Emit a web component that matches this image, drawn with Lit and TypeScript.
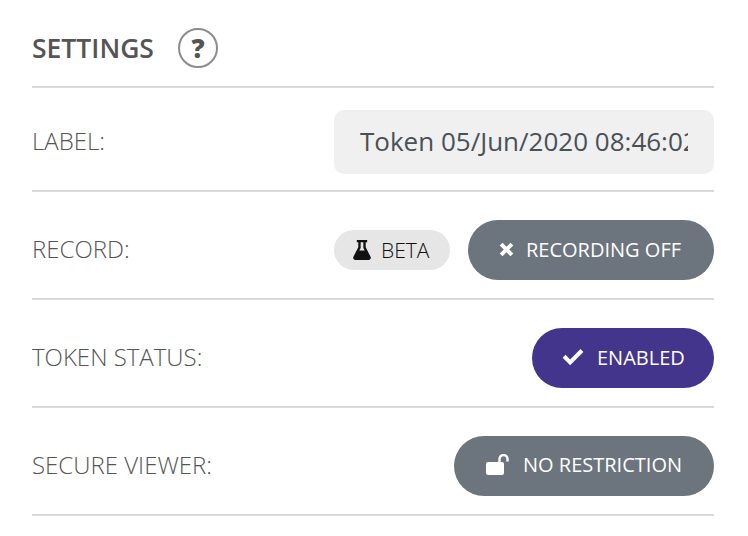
import { LitElement, html, css, svg } from "lit";
import { customElement } from "lit/decorators.js";

const flask = svg`<path fill-rule="evenodd" d="M4.4 1h9.2v2h-1.3v4.2l4.3 8c.7 1.4-.2 2.8-1.7 2.8H3.1c-1.5 0-2.4-1.4-1.7-2.8l4.3-8V3H4.4V1zm3.4 2v4.8L6.6 10h4.8l-1.2-2.2V3H7.8z"/>`;
const times = svg`<path d="M2.6 5.2 5.2 2.6 9 6.4 12.8 2.6 15.4 5.2 11.6 9 15.4 12.8 12.8 15.4 9 11.6 5.2 15.4 2.6 12.8 6.4 9 2.6 5.2z"/>`;
const check = svg`<path d="M0.6 9.6 3.2 7 7.4 11.2 16.8 1.8 19.4 4.4 7.4 16.4 0.6 9.6z"/>`;
const unlock = svg`<rect x="0" y="8" width="18" height="13" rx="2"/><path d="M13.5 9V5a4 4 0 0 1 8 0v2.4" fill="none" stroke="currentColor" stroke-width="2.4"/>`;

@customElement("app-root")
export class AppRoot extends LitElement {
  static styles = css`
    :host { display: block; width: 748px; height: 536px; box-sizing: border-box; padding: 0 34px 0 32px; background: #fff; font-family: "Open Sans", sans-serif; overflow: hidden; }
    .head { display: flex; align-items: center; gap: 24px; height: 88px; padding-top: 10px; box-sizing: border-box; border-bottom: 2px solid #d9d9d9; }
    h2 { margin: 0; font-size: 26.5px; font-weight: 600; color: #555; line-height: 32px; }
    .help { width: 40px; height: 40px; box-sizing: border-box; border: 2px solid #8c8c8c; border-radius: 50%; display: flex; align-items: center; justify-content: center; font-size: 26px; font-weight: 800; color: #555; line-height: 1; }
    .row { display: flex; align-items: center; justify-content: space-between; height: 108px; box-sizing: border-box; padding-top: 10px; border-bottom: 2px solid #d9d9d9; }
    .row.first { height: 104px; padding-top: 6px; }
    .label { font-size: 24px; font-weight: 300; color: #555; padding-bottom: 3px; }
    .controls { display: flex; align-items: center; gap: 18px; }
    .input { width: 380px; height: 64px; box-sizing: border-box; background: #f0f0f0; border-radius: 10px; padding: 0 26px 2px; display: flex; align-items: center; font-size: 26px; color: #495057; }
    .clip { width: 328px; overflow: hidden; white-space: nowrap; }
    .beta { display: flex; align-items: center; gap: 10px; height: 40px; width: 116px; box-sizing: border-box; padding-left: 19px; border-radius: 20px; background: #e6e6e6; font-size: 21px; font-weight: 300; color: #111; }
    .beta svg { width: 18px; height: 20px; fill: #111; }
    .btn { display: flex; align-items: center; height: 60px; box-sizing: border-box; border-radius: 30px; padding-bottom: 2px; color: #fff; background: #6c757d; font-size: 20px; }
    .btn svg { fill: currentColor; display: block; }
    .off { width: 246px; padding-left: 29px; gap: 10px; }
    .off svg { width: 19px; height: 19px; }
    .on { width: 182px; padding-left: 30px; gap: 13px; background: #43348c; }
    .on svg { width: 22px; height: 20px; }
    .sec { width: 260px; padding-left: 32px; gap: 14px; padding-bottom: 3px; }
    .sec svg { width: 23px; height: 21px; }
  `;

  render() {
    return html`
      <div class="head"><h2>SETTINGS</h2><div class="help">?</div></div>
      <div class="row first">
        <span class="label">LABEL:</span>
        <div class="input"><span class="clip">Token 05/Jun/2020 08:46:02</span></div>
      </div>
      <div class="row">
        <span class="label">RECORD:</span>
        <div class="controls">
          <div class="beta"><svg viewBox="1 1 16 17" preserveAspectRatio="none">${flask}</svg>BETA</div>
          <div class="btn off"><svg viewBox="0 0 18 18">${times}</svg>RECORDING OFF</div>
        </div>
      </div>
      <div class="row">
        <span class="label">TOKEN STATUS:</span>
        <div class="btn on"><svg viewBox="0 0 20 18">${check}</svg>ENABLED</div>
      </div>
      <div class="row">
        <span class="label">SECURE VIEWER:</span>
        <div class="btn sec"><svg viewBox="0 0 23 21">${unlock}</svg>NO RESTRICTION</div>
      </div>
    `;
  }
}
